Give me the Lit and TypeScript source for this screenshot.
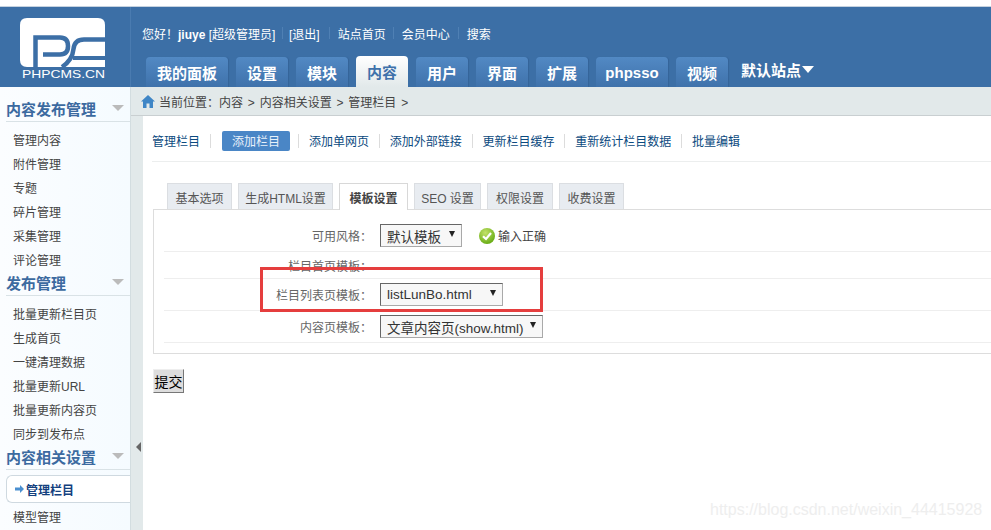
import { LitElement, html, css } from "lit";
import { customElement } from "lit/decorators.js";

const TABS: { t: string; w: number }[] = [
  { t: "我的面板", w: 82 }, { t: "设置", w: 52 }, { t: "模块", w: 52 }, { t: "内容", w: 52 }, { t: "用户", w: 52 },
  { t: "界面", w: 52 }, { t: "扩展", w: 52 }, { t: "phpsso", w: 72 }, { t: "视频", w: 52 },
];
const SIDE: { title: string; items: string[] }[] = [
  { title: "内容发布管理", items: ["管理内容", "附件管理", "专题", "碎片管理", "采集管理", "评论管理"] },
  { title: "发布管理", items: ["批量更新栏目页", "生成首页", "一键清理数据", "批量更新URL", "批量更新内容页", "同步到发布点"] },
];
const SUBS = ["添加单网页", "添加外部链接", "更新栏目缓存", "重新统计栏目数据", "批量编辑"];
const FORM_TABS: { t: string; w: number }[] = [
  { t: "基本选项", w: 65 }, { t: "生成HTML设置", w: 95 }, { t: "模板设置", w: 69 }, { t: "SEO 设置", w: 67 }, { t: "权限设置", w: 66 }, { t: "收费设置", w: 65 },
];

@customElement("app-root")
export class AppRoot extends LitElement {
  static styles = css`
    :host { display: block; width: 991px; height: 530px; overflow: hidden; position: relative; background: #fff;
      font-family: "Liberation Sans", "Noto Sans CJK SC", sans-serif; font-size: 12px; color: #444; }
    .top { height: 6px; border-bottom: 1px solid #c5d2e0; box-sizing: content-box; }
    .header { height: 80px; background: #3c6fa6; display: flex; }
    .logo { width: 131px; height: 80px; flex: none; border-right: 1px solid #4a7bb0; box-sizing: border-box; }
    .logo svg { display: block; }
    .hright { padding-left: 11px; display: flex; flex-direction: column; }
    .links { height: 49px; display: flex; align-items: center; color: #fff; padding-top: 3px; box-sizing: border-box; white-space: nowrap; }
    .links b { font-weight: 700; }
    .links .who { width: 133px; }
    .sep { width: 1px; height: 12px; background: #4f80b4; margin: 0 6.5px; }
    .sep.w { margin: 0 8px 0 7px; }
    .sep.x { margin: 0 8px 0 9px; }
    .sep.y { margin: 0 8px; }
    .tabs { display: flex; gap: 8px; padding-left: 4px; height: 31px; align-items: flex-end; }
    .tab { height: 30px; box-sizing: border-box; display: flex; align-items: center; justify-content: center;
      background: linear-gradient(#5289c4, #3f72ab); border-radius: 4px 4px 0 0; color: #fff; font-weight: 700; font-size: 15px;
      box-shadow: 1px 0 1px #356499; }
    .tab.on { height: 31px; background: linear-gradient(#fff, #e2e9ea); color: #3f72ab; box-shadow: none; }
    .site { color: #fff; font-weight: 700; font-size: 15px; display: flex; align-items: center; gap: 1px; height: 30px; margin-left: 5px; padding-bottom: 5px; box-sizing: border-box; }
    .site i { width: 0; height: 0; border: 6.5px solid transparent; border-top: 7px solid #fff; border-bottom: 0; }

    .body { display: flex; height: 443px; }
    .side { width: 131px; flex: none; background: linear-gradient(90deg, #fbfdff, #f5fbff); border-right: 1px solid #d3dde0; box-sizing: border-box; padding: 11px 0 0 6px; overflow: hidden; }
    .h { height: 24px; border-bottom: 1px solid #d9e2e6; display: flex; align-items: center; justify-content: space-between; box-sizing: border-box;
      font-size: 15px; font-weight: 700; color: #3c6aa0; padding: 0 6px 3px 0; }
    .h i { width: 0; height: 0; border: 6px solid transparent; border-top: 6px solid #bbb; border-bottom: 0; }
    .items { padding: 6px 0 0 7px; }
    .item { height: 24px; line-height: 26px; color: #444; white-space: nowrap; }
    .active { height: 28px; margin: -1px -2px 2px -7px; width: 127px; border: 1px solid #cfd9e0; border-right: 0; border-radius: 6px 0 0 6px; background: #fff; box-sizing: border-box;
      display: flex; align-items: center; padding-left: 8px; gap: 2px; color: #13407e; font-weight: 700; }
    .gutter { width: 12px; flex: none; background: #e2e9ea; position: relative; }
    .gutter i { position: absolute; left: 5px; top: 355px; width: 0; height: 0; border: 5px solid transparent; border-right: 5px solid #666; border-left: 0; }

    .main { flex: 1; min-width: 0; }
    .crumb { height: 29px; margin-left: -12px; background: #e2e9ea; border-bottom: 1px solid #c9cfd1; display: flex; align-items: center; padding-left: 10px; box-sizing: border-box; gap: 4px; color: #444; white-space: nowrap; word-spacing: 1.5px; position: relative; }
    .page { padding: 15px 0 0 9px; }
    .subs { height: 30px; border-bottom: 1px solid #eceeee; display: flex; align-items: flex-start; white-space: nowrap; box-sizing: content-box; }
    .sub { color: #0b4a80; height: 20px; line-height: 23px; }
    .sub.on { background: #4a86c6; color: #e8f1fa; border-radius: 2px; width: 68px; text-align: center; margin: 0 -1.8px 0 1.1px; }
    .bar { width: 1px; height: 14px; background: #dcdcdc; margin: 3px 9.9px 0; }
    .ftabs { display: flex; gap: 6px; padding: 21px 0 0 15px; height: 27px; box-sizing: content-box; position: relative; z-index: 1; margin-bottom: -1px; }
    .ft { height: 26px; padding-top: 1px; display: flex; align-items: center; justify-content: center; box-sizing: border-box; background: #e8ecf1; border: 1px solid #dbdee2; border-bottom: 0; color: #555; white-space: nowrap; }
    .ft.on { height: 27px; background: #fff; font-weight: 700; color: #444; border-color: #d8d8d8; }
    .box { border: 1px solid #ddd; border-right: 0; padding: 10px 0 10px 10px; margin-left: 1px; }
    .row { display: flex; align-items: center; border-bottom: 1px solid #eee; height: 32px; box-sizing: border-box; }
    .row.short { height: 27px; }
    .lab { width: 208px; text-align: right; flex: none; margin-right: 8px; color: #666; }
    .sel { height: 23px; box-sizing: border-box; border: 1px solid #a9a9a9; border-top-color: #666; border-left-color: #666; background: #f7f7f7; display: flex; align-items: center; justify-content: space-between; padding: 0 5px 0 6px; font-size: 13.5px; color: #333; white-space: nowrap; }
    .sel i { width: 0; height: 0; border: 3.5px solid transparent; border-top: 6px solid #222; border-bottom: 0; margin: -3px 1px 0 0; }
    .ok { display: flex; align-items: center; gap: 3px; margin-left: 17px; color: #444; }
    .submit { margin: 15px 0 0 1px; display: block; width: 31px; height: 24px; padding: 0; background: #ddd; border: 1px solid; border-color: #eee #777 #777 #eee; font: 14px "Noto Sans CJK SC", sans-serif; color: #000; }

    .redbox { position: absolute; left: 260px; top: 267px; width: 283px; height: 45px; border: 3px solid #e53e3e; box-sizing: border-box; }
    .mark { position: absolute; left: 710px; top: 501px; font-size: 16px; color: #eee; white-space: nowrap; }
  `;

  render() {
    return html`
      <div class="top"></div>
      <div class="header">
        <div class="logo">
          <svg width="130" height="80" viewBox="0 7 130 80">
            <path d="M27 18 H98 Q105 18 105 25 V67 H27 Q20 67 20 60 V25 Q20 18 27 18 Z" fill="#fff"/>
            <path d="M35.5 67 V37.5 H60 Q68 37.5 68 46 Q68 54.5 60 54.5 H43" fill="none" stroke="#3c6fa6" stroke-width="4.5"/>
            <path d="M105 39.5 H84 Q74.5 39.5 73.5 49 Q72.5 60 62 67" fill="none" stroke="#3c6fa6" stroke-width="4.5"/>
            <path d="M73 58 H105" fill="none" stroke="#3c6fa6" stroke-width="4"/>
            <text x="22" y="78" font-size="11.5" fill="#fff" textLength="83" lengthAdjust="spacingAndGlyphs" font-family="Liberation Sans">PHPCMS.CN</text>
          </svg>
        </div>
        <div class="hright">
          <div class="links">
            <span class="who">您好！<b>jiuye</b> [超级管理员]</span>
            <span class="sep"></span><span>[退出]</span>
            <span class="sep x"></span><span>站点首页</span>
            <span class="sep w"></span><span>会员中心</span>
            <span class="sep y"></span><span>搜索</span>
          </div>
          <div class="tabs">
            ${TABS.map((t) => html`<div class="tab ${t.t === "内容" ? "on" : ""}" style="width:${t.w}px">${t.t}</div>`)}
            <div class="site">默认站点<i></i></div>
          </div>
        </div>
      </div>
      <div class="body">
        <div class="side">
          ${SIDE.map((s) => html`
            <div class="h">${s.title}<i></i></div>
            <div class="items">${s.items.map((i) => html`<div class="item">${i}</div>`)}</div>
          `)}
          <div class="h">内容相关设置<i></i></div>
          <div class="items">
            <div class="active">
              <svg width="9" height="8" viewBox="0 0 9 8"><path d="M0 2.5 H5 V0 L9 4 L5 8 V5.5 H0 Z" fill="#4a8fd0"/></svg>
              管理栏目
            </div>
            <div class="item">模型管理</div>
          </div>
        </div>
        <div class="gutter"><i></i></div>
        <div class="main">
          <div class="crumb">
            <svg width="14" height="13" viewBox="0 0 14 13"><path d="M7 0 L14 6.5 H12 V13 H8.5 V8.5 H5.5 V13 H2 V6.5 H0 Z" fill="#3f86c6"/></svg>
            <span>当前位置：内容 &gt; 内容相关设置 &gt; 管理栏目 &gt;</span>
          </div>
          <div class="page">
            <div class="subs">
              <span class="sub">管理栏目</span><span class="bar"></span>
              <span class="sub on">添加栏目</span>
              ${SUBS.map((s) => html`<span class="bar"></span><span class="sub">${s}</span>`)}
            </div>
            <div class="ftabs">
              ${FORM_TABS.map((t) => html`<div class="ft ${t.t === "模板设置" ? "on" : ""}" style="width:${t.w}px">${t.t}</div>`)}
            </div>
            <div class="box">
              <div class="row">
                <span class="lab">可用风格：</span>
                <div class="sel" style="width:82px">默认模板<i></i></div>
                <div class="ok">
                  <svg width="16" height="16" viewBox="0 0 16 16">
                    <defs><radialGradient id="g" cx="40%" cy="30%" r="75%"><stop offset="0" stop-color="#c4e26a"/><stop offset="1" stop-color="#62a90f"/></radialGradient></defs>
                    <circle cx="8" cy="8" r="8" fill="url(#g)"/>
                    <path d="M4 8.2 L7 11 L12 5" fill="none" stroke="#fff" stroke-width="2.2"/>
                  </svg>
                  <span>输入正确</span>
                </div>
              </div>
              <div class="row short"><span class="lab">栏目首页模板：</span></div>
              <div class="row"><span class="lab">栏目列表页模板：</span><div class="sel" style="width:123px">listLunBo.html<i></i></div></div>
              <div class="row"><span class="lab">内容页模板：</span><div class="sel" style="width:163px">文章内容页(show.html)<i></i></div></div>
            </div>
            <button class="submit">提交</button>
          </div>
        </div>
      </div>
      <div class="redbox"></div>
      <div class="mark">https://blog.csdn.net/weixin_44415928</div>
    `;
  }
}
